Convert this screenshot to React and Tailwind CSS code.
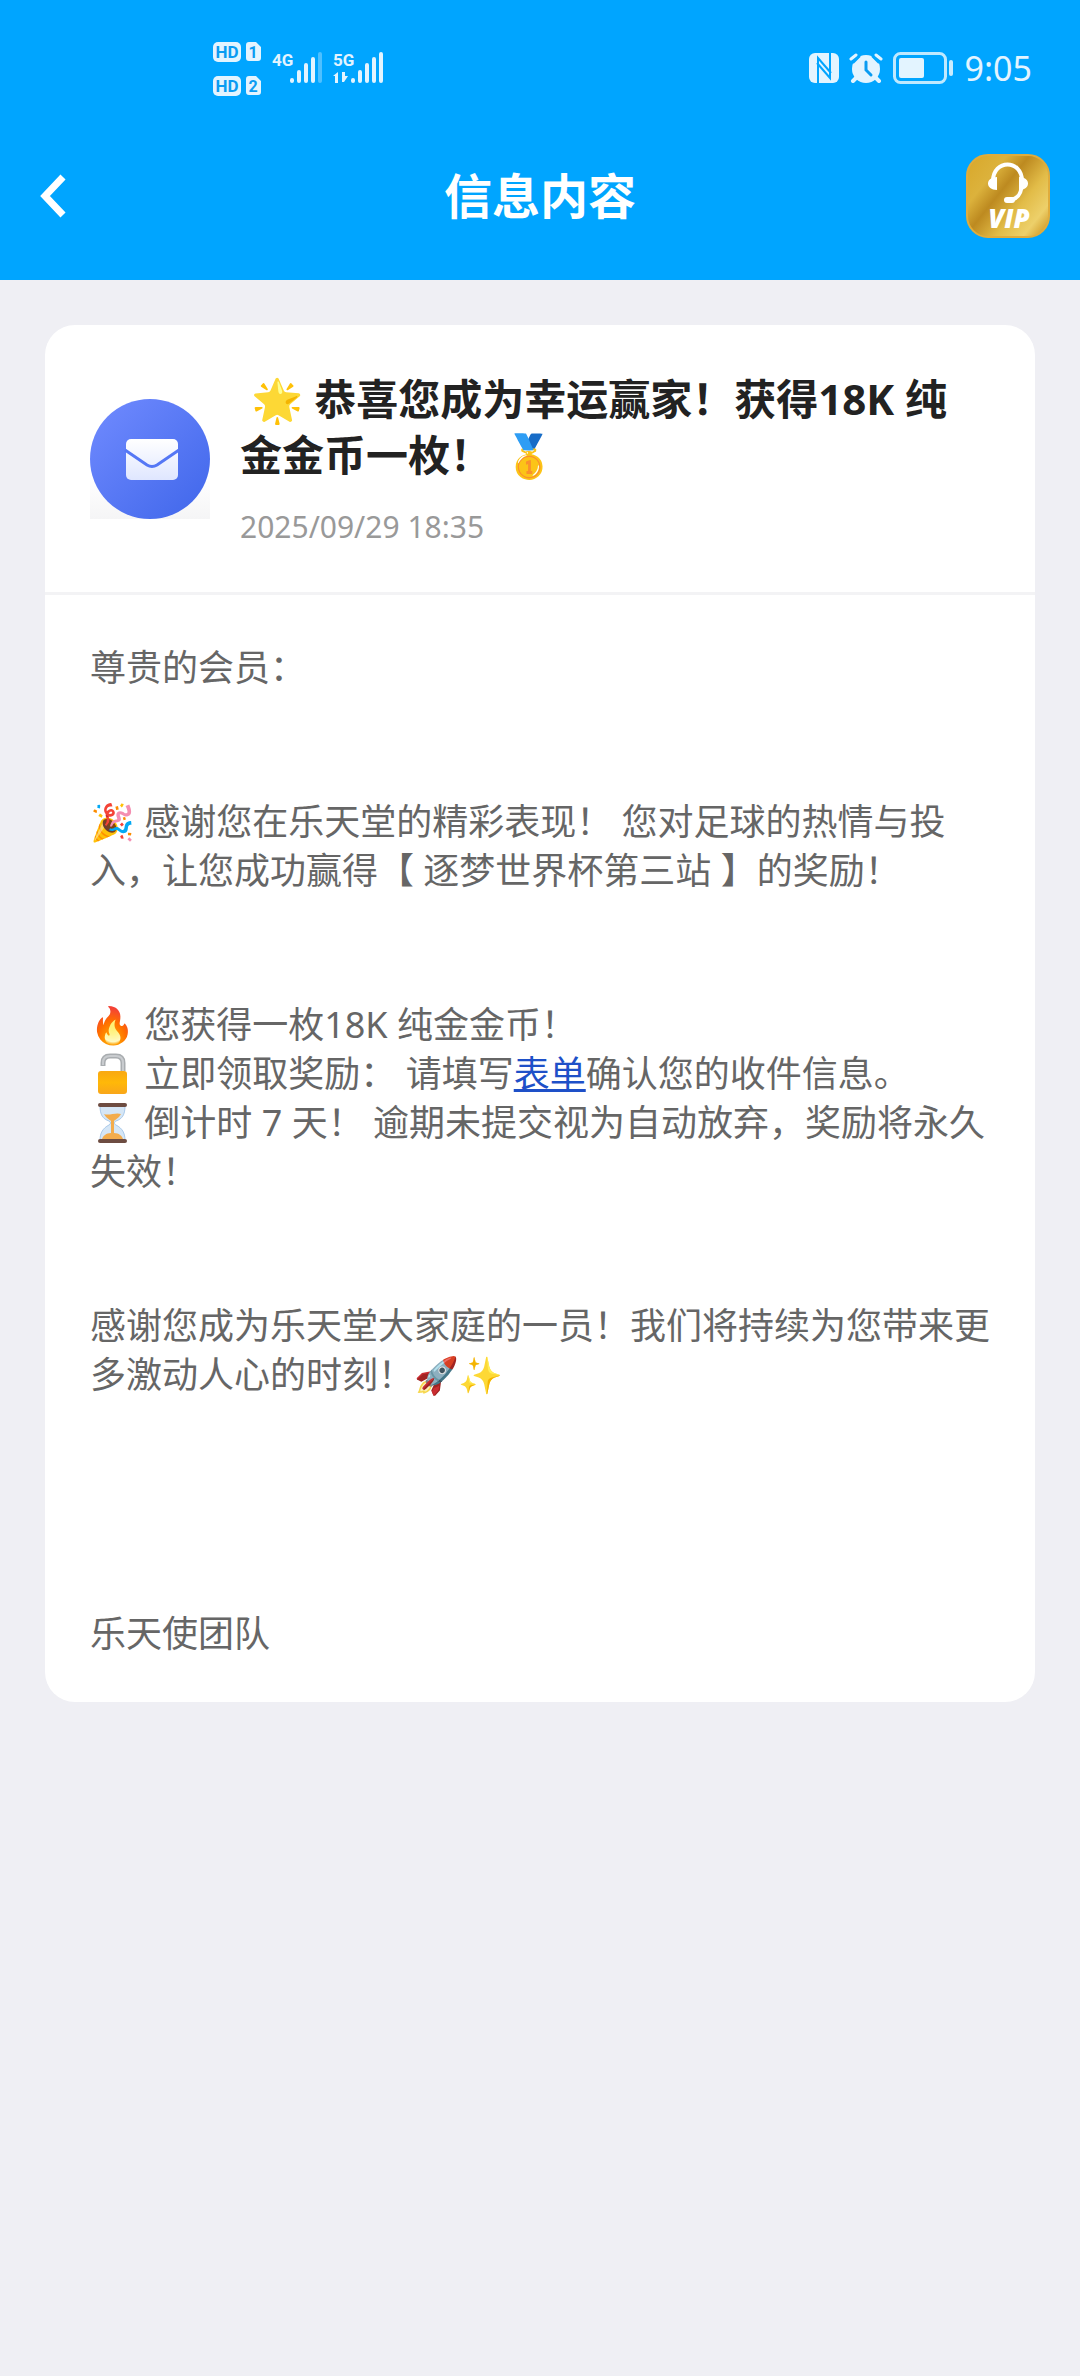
import React from "react";

const font = "font-['Noto_Sans','Noto_Sans_CJK_SC','Noto_Color_Emoji',sans-serif]";

const SignalIcons = () => (
  <svg viewBox="0 -2 176 56" className="h-14 w-44" role="img" aria-label="信号">
    <g fill="#e3f4ff">
      <rect x="1" y="0" width="28" height="20" rx="5" />
      <rect x="1" y="34" width="28" height="20" rx="5" />
      <path d="M37 0h7l5 5v11q0 3-3 3h-9q-3 0-3-3V3q0-3 3-3zM37 34h7l5 5v11q0 3-3 3h-9q-3 0-3-3V37q0-3 3-3z" />
    </g>
    <g fill="#0a9cf2" fontFamily="Roboto, sans-serif" fontWeight="700" textAnchor="middle">
      <text x="15" y="16" fontSize="17">HD</text>
      <text x="15" y="50" fontSize="17">HD</text>
      <text x="41" y="16" fontSize="16">1</text>
      <text x="41" y="50" fontSize="16">2</text>
    </g>
    <g fill="#e3f4ff" fontFamily="Roboto, sans-serif" fontWeight="700" fontSize="17">
      <text x="60" y="24">4G</text>
      <text x="121" y="24">5G</text>
    </g>
    <g stroke="#e3f4ff" strokeWidth="4" strokeLinecap="round">
      <path d="M80 39V38M87 39V30M94 39V23M101 39V17" />
      <path d="M141 39V38M148 39V30M155 39V23M162 39V17M169 39V12" />
      <path d="M108 39V12" strokeOpacity=".35" />
    </g>
    <path d="M121 34l5-4v11h-3v-7h-2zM130 30h3v4h3l-4 6h-2z" fill="#e3f4ff" />
  </svg>
);

const NfcIcon = () => (
  <svg viewBox="0 0 30 30" className="size-[30px]" role="img" aria-label="NFC">
    <rect width="30" height="30" rx="6" fill="#e3f4ff" />
    <path d="M9 30V5l13 15M21 0v25L8 10" fill="none" stroke="#00a5ff" strokeWidth="2" />
  </svg>
);

const AlarmIcon = () => (
  <svg viewBox="0 0 34 30" className="h-[30px] w-[34px]" role="img" aria-label="闹钟">
    <circle cx="17" cy="16" r="14" fill="#e3f4ff" />
    <path d="M2 6l5-4M32 6l-5-4" stroke="#e3f4ff" strokeWidth="3" strokeLinecap="round" />
    <path d="M7 25l-3 3M27 25l3 3" stroke="#e3f4ff" strokeWidth="4" strokeLinecap="round" />
    <path d="M4 10l7-7M30 10l-7-7" stroke="#00a5ff" strokeWidth="2" />
    <path d="M17 9v8l5 5" fill="none" stroke="#0a9cf2" strokeWidth="3" strokeLinecap="round" />
  </svg>
);

const BatteryIcon = () => (
  <svg viewBox="0 0 62 32" className="h-8 w-[62px]" role="img" aria-label="电池">
    <rect x="1.500" y="1.500" width="51" height="29" rx="6" fill="none" stroke="#bfe9ff" strokeWidth="3" />
    <rect x="6" y="6" width="25" height="20" rx="2" fill="#e3f4ff" />
    <rect x="56" y="8" width="4" height="16" rx="2" fill="#c9ecff" />
  </svg>
);

const VipIcon = () => (
  <svg viewBox="0 0 84 84" className="size-[84px]" aria-hidden="true">
    <defs>
      <linearGradient id="gold" x1="0" y1=".1" x2="1" y2=".9">
        <stop offset="0" stopColor="#d9a92c" />
        <stop offset=".25" stopColor="#dcb23c" />
        <stop offset=".42" stopColor="#bd8a20" />
        <stop offset=".65" stopColor="#e2bc48" />
        <stop offset=".85" stopColor="#edd06a" />
        <stop offset="1" stopColor="#d09a28" />
      </linearGradient>
    </defs>
    <rect x="1" y="1" width="82" height="82" rx="21" fill="url(#gold)" stroke="#e0ac3c" strokeWidth="2" />
    <path d="M27 27C27 5 56 5 56 27c0 10-2 19-14 19" fill="none" stroke="#fff" strokeWidth="4" />
    <path d="M31 23v13c-12 0-12-13 0-13zM53 23v13c12 0 12-13 0-13z" fill="#fff" />
    <rect x="38" y="43" width="11" height="6" rx="3" fill="#fff" />
    <text x="43" y="74" textAnchor="middle" fill="#fff" fontFamily="Open Sans, sans-serif" fontSize="26" fontWeight="800" fontStyle="italic">
      VIP
    </text>
  </svg>
);

const MailIcon = () => (
  <svg viewBox="0 0 120 120" className="size-[120px] shrink-0" aria-hidden="true">
    <defs>
      <linearGradient id="mail" x1="0" y1="0" x2="1" y2="1">
        <stop offset="0" stopColor="#718bff" />
        <stop offset="1" stopColor="#3f66ea" />
      </linearGradient>
      <linearGradient id="shade" x1="0" y1="0" x2="0" y2="1">
        <stop offset=".65" stopColor="#fff" />
        <stop offset="1" stopColor="#f5f5f6" />
      </linearGradient>
      <linearGradient id="paper" x1="0" y1="0" x2="0" y2="1">
        <stop offset="0" stopColor="#fff" />
        <stop offset="1" stopColor="#dfe6ff" />
      </linearGradient>
    </defs>
    <rect width="120" height="120" fill="url(#shade)" />
    <circle cx="60" cy="60" r="60" fill="url(#mail)" />
    <rect x="36" y="40" width="52" height="41" rx="5" fill="url(#paper)" />
    <path d="M35 51l22 15q5 3 10 0l22-15" fill="none" stroke="#5577f5" strokeWidth="3" />
  </svg>
);

const UnlockIcon = () => (
  <svg viewBox="0 0 45 42" className="inline-block h-[42px] w-[45px] align-[-8px]" role="img" aria-label="🔓">
    <defs>
      <linearGradient id="lock" x1="0" y1="0" x2="0" y2="1">
        <stop offset="0" stopColor="#f9a812" />
        <stop offset=".5" stopColor="#ffb808" />
        <stop offset="1" stopColor="#f9a61a" />
      </linearGradient>
    </defs>
    <path d="M13 13V10q0-7 7-7h6q7 0 7 7v8" fill="none" stroke="#a9adb0" strokeWidth="5" />
    <path d="M13 12V10q0-7 7-7h6q7 0 7 7v8" fill="none" stroke="#c9cccf" strokeWidth="2" />
    <rect x="8" y="18" width="29" height="23" rx="3" fill="url(#lock)" />
  </svg>
);

const HourglassIcon = () => (
  <svg viewBox="0 0 45 42" className="inline-block h-[42px] w-[45px] align-[-8px]" role="img" aria-label="⏳">
    <path d="M10 4h25c0 9-3 13-9 15-2 1-2 3 0 4 6 3 9 8 9 15H10c0-7 3-12 9-15 2-1 2-3 0-4-6-2-9-6-9-15z" fill="#d5e6f6" stroke="#a9c9ea" />
    <path d="M14 12c5 2 12-2 17 0-2 4-5 5-7 7v12c5 0 8 3 9 6H12c1-3 4-6 9-6V19c-2-2-5-3-7-7z" fill="#f3ac4c" />
    <rect x="8" y="1" width="29" height="4" rx="2" fill="#6d4c41" />
    <rect x="8" y="37" width="29" height="4" rx="2" fill="#6d4c41" />
  </svg>
);

const StatusBar = () => (
  <div className="flex h-[136px] items-center justify-between pr-12 pl-[212px]">
    <SignalIcons />
    <div className="flex items-center gap-[10px] text-[#e3f4ff]">
      <NfcIcon />
      <AlarmIcon />
      <BatteryIcon />
      <time className="text-[34px]">9:05</time>
    </div>
  </div>
);

const NavBar = () => (
  <nav className="grid h-36 grid-cols-[1fr_auto_1fr] items-center px-[30px] pb-6 text-white">
    <button type="button" aria-label="返回" className="justify-self-start p-2">
      <svg viewBox="0 0 30 44" className="h-11 w-[30px]" aria-hidden="true">
        <path d="M25 3L7 22l18 19" fill="none" stroke="currentColor" strokeWidth="7" />
      </svg>
    </button>
    <h1 className="text-[48px] leading-none font-bold">信息内容</h1>
    <button type="button" aria-label="VIP 客服" className="justify-self-end">
      <VipIcon />
    </button>
  </nav>
);

const App = () => {
  return (
    <div className={`min-h-screen bg-[#efeff4] ${font}`} lang="zh-CN">
      <header className="bg-[#00a5ff]">
        <StatusBar />
        <NavBar />
      </header>

      <main className="p-[45px]">
        <article className="rounded-[30px] bg-white">
          {/* 标题 */}
          <div className="flex items-center gap-[30px] border-b-3 border-[#f3f3f5] px-[45px] pt-[46px] pb-[45px]">
            <MailIcon />
            <div className="pr-6">
              <h2 className="text-[42px] leading-[56px] font-bold text-[#222]">
                &nbsp;🌟 恭喜您成为幸运赢家！获得18K 纯金金币一枚！ 🥇
              </h2>
              <time className="mt-6 block text-[30px] leading-10 text-[#999]">2025/09/29 18:35</time>
            </div>
          </div>

          {/* 正文 */}
          <div className="space-y-[105px] px-[45px] pt-12 pb-11 text-[36px] leading-[49px] text-[#666]">
            <p>尊贵的会员：</p>
            <p>🎉 感谢您在乐天堂的精彩表现！ 您对足球的热情与投入，让您成功赢得【 逐梦世界杯第三站 】的奖励！</p>
            <p>
              🔥 您获得一枚18K 纯金金币！
              <br />
              <UnlockIcon /> 立即领取奖励： 请填写
              <a href="#form" className="text-[#1e50c8] underline">表单</a>
              确认您的收件信息。
              <br />
              <HourglassIcon /> 倒计时 7 天！ 逾期未提交视为自动放弃，奖励将永久失效！
            </p>
            <p>感谢您成为乐天堂大家庭的一员！我们将持续为您带来更多激动人心的时刻！🚀✨</p>
            <p className="pt-[105px]">乐天使团队</p>
          </div>
        </article>
      </main>
    </div>
  );
};

export default App;
